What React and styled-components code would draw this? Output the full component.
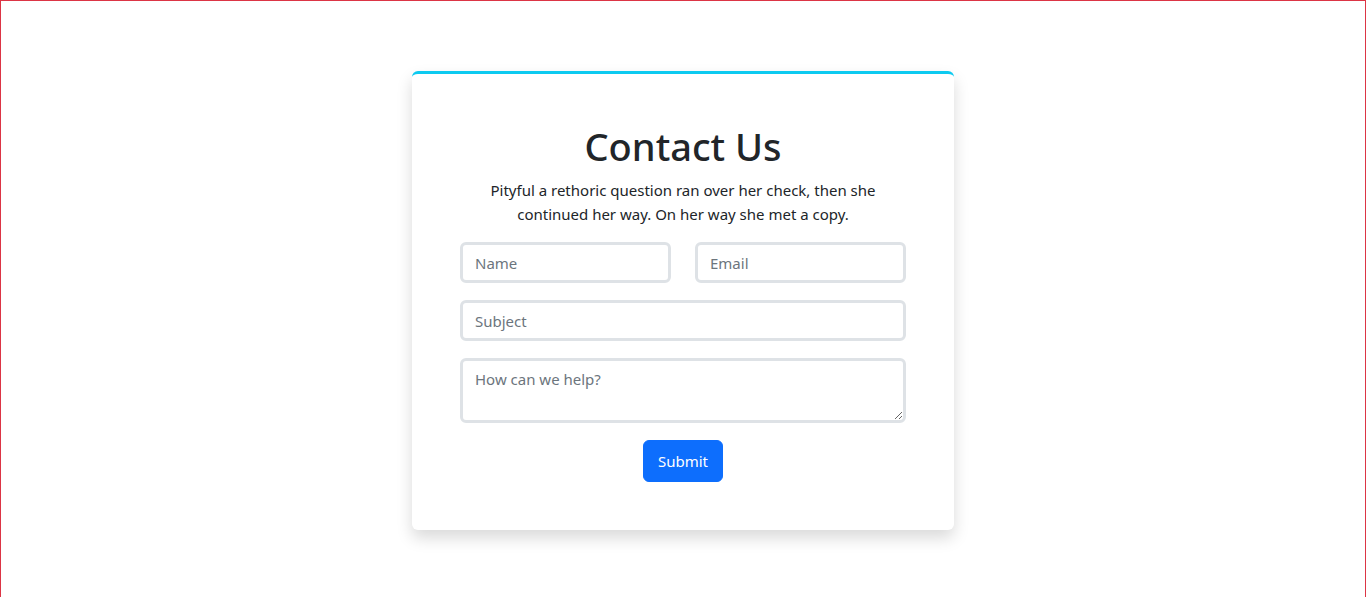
import React from 'react';
import styled, { createGlobalStyle } from 'styled-components';

const GlobalStyle = createGlobalStyle`
  html, body {
    margin: 0;
    padding: 0;
    background: #fff;
  }
  body {
    font-family: 'Noto Sans', 'Open Sans', 'Liberation Sans', sans-serif;
    color: #212529;
  }
  * {
    box-sizing: border-box;
  }
`;

const Page = () => {
  return (
    <>
      <GlobalStyle />
      <Frame>
        <Card>
          <Title>Contact Us</Title>
          <Lead>
            Pityful a rethoric question ran over her check, then she continued her way. On her way
            she met a copy.
          </Lead>
          <Form onSubmit={(e) => e.preventDefault()}>
            <Row>
              <Field type="text" placeholder="Name" />
              <Field type="email" placeholder="Email" />
            </Row>
            <Field type="text" placeholder="Subject" />
            <Message placeholder="How can we help?" rows={2} />
            <SubmitButton type="submit">Submit</SubmitButton>
          </Form>
        </Card>
      </Frame>
    </>
  );
};

const Frame = styled.div`
  min-height: 640px;
  border: 1px solid #dc3545;
  padding-top: 70px;
  padding-bottom: 70px;
  display: flex;
  justify-content: center;
  align-items: flex-start;
`;

const Card = styled.div`
  width: 542px;
  background: #fff;
  border-top: 3px solid #0dcaf0;
  border-radius: 6px;
  box-shadow: 0 0.5rem 1rem rgba(0, 0, 0, 0.15);
  padding: 48px 48px 48px;
  text-align: center;
`;

const Title = styled.h1`
  margin: 0 0 8px;
  font-size: 38px;
  line-height: 48px;
  font-weight: 500;
  color: #212529;
`;

const Lead = styled.p`
  margin: 0 auto 16px;
  max-width: 400px;
  font-size: 15px;
  line-height: 24px;
  color: #212529;
`;

const Form = styled.form`
  display: flex;
  flex-direction: column;
  gap: 17px;
  align-items: stretch;
`;

const Row = styled.div`
  display: grid;
  grid-template-columns: 1fr 1fr;
  column-gap: 24px;
`;

const Field = styled.input`
  width: 100%;
  height: 41px;
  padding: 6px 12px;
  font-family: inherit;
  font-size: 15px;
  color: #212529;
  background: #fff;
  border: 3px solid #dee2e6;
  border-radius: 6px;
  outline: none;
  &::placeholder {
    color: #6c757d;
  }
`;

const Message = styled.textarea`
  width: 100%;
  height: 65px;
  padding: 6px 12px;
  font-family: inherit;
  font-size: 15px;
  line-height: 24px;
  color: #212529;
  background: #fff;
  border: 3px solid #dee2e6;
  border-radius: 6px;
  outline: none;
  resize: vertical;
  &::placeholder {
    color: #6c757d;
  }
`;

const SubmitButton = styled.button`
  align-self: center;
  width: 80px;
  height: 42px;
  font-family: inherit;
  font-size: 15px;
  color: #fff;
  background: #0d6efd;
  border: 1px solid #0d6efd;
  border-radius: 6px;
  cursor: pointer;
`;

export default Page;
